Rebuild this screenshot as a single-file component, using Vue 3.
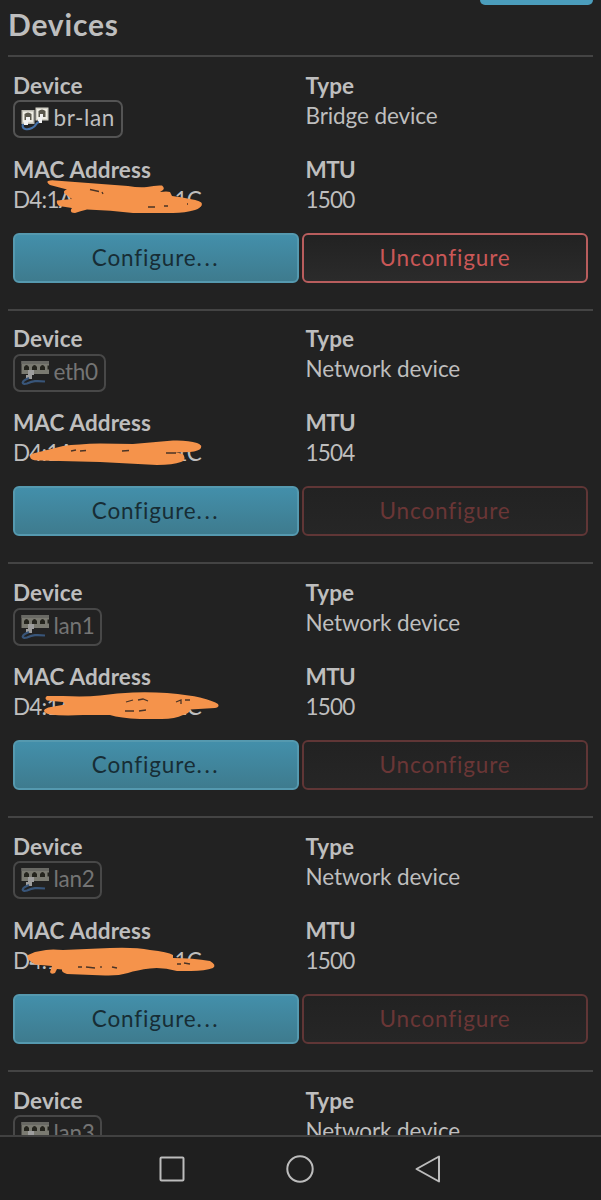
<template>
  <div class="screen">
    <main class="content">
      <div class="top-action"></div>
      <h3 class="title">Devices</h3>

      <section v-for="d in devices" :key="d.name" class="device">
        <div class="grid">
          <div class="cell">
            <div class="label">Device</div>
            <span class="badge" :class="{ inactive: !d.bridge }">
              <svg v-if="d.bridge" class="badge-icon" viewBox="0 0 28 26">
                <path d="M0.5 5h13v14h-13z" fill="#bdbbb2" />
                <path d="M14.5 2.5h13v13h-13z" fill="#d2d0c6" />
                <path d="M2 6.5h10v11H2zM16 4h10v10H16z" fill="#efede4" />
                <path d="M3.5 9q3.5-3 7 0v6h-7zM17.5 6q3.5-3 7 0v6h-7z" fill="#5b584d" />
                <path d="M5 12h4v4H7v4H3v-4h2zM19 9h3v4h-1v5h-4v-5h2z" fill="#f2f2f2" />
                <path d="M2 19C0 25 7 25 11 23C16 21 14 18 18 17" class="cable" />
              </svg>
              <svg v-else class="badge-icon" viewBox="0 0 28 26">
                <path d="M0.5 2h27.5v13H0.5z" fill="#aaa99c" />
                <path d="M0.5 2h27.5v3H0.5z" fill="#8f8f88" />
                <path d="M3 8q2.5-4 5 0v3H3zM11 8q2.5-4 5 0v3h-5zM19 8q2.5-4 5 0v3h-5zM26.5 6.5h1.5v4h-1.5z" fill="#26261b" />
                <path d="M7 11h6v5h-2v4H5v-4h2z" fill="#e0e0e0" />
                <path d="M8 19C0 22 0 26 6 24.5C12 22 15 21.5 24 22.5" class="cable" />
              </svg>
              <span>{{ d.name }}</span>
            </span>
          </div>
          <div class="cell">
            <div class="label">Type</div>
            <div class="value">{{ d.type }}</div>
          </div>
          <template v-if="d.mtu">
            <div class="cell">
              <div class="label">MAC Address</div>
              <div class="value mac">
                <span class="digits">D4:1A</span>
                <span class="digits">1C</span>
                <svg class="scribble" viewBox="0 0 210 30">
                  <path :d="d.scribble" class="ink" />
                  <path :d="d.gaps" class="gaps" />
                </svg>
              </div>
            </div>
            <div class="cell">
              <div class="label mtu-label">MTU</div>
              <div class="value digits">{{ d.mtu }}</div>
            </div>
          </template>
        </div>
        <div v-if="d.mtu" class="actions">
          <button class="btn configure">Configure<span class="dots">...</span></button>
          <button class="btn unconfigure" :disabled="!d.bridge">Unconfigure</button>
        </div>
      </section>
    </main>

    <nav class="navbar">
      <svg viewBox="0 0 28 28"><rect x="2.5" y="2.5" width="23" height="23" rx="1" /></svg>
      <svg viewBox="0 0 28 28"><circle cx="14" cy="14" r="12.7" /></svg>
      <svg viewBox="0 0 28 28"><path d="M2.5 14L25 1.5V26.5Z" /></svg>
    </nav>
  </div>
</template>

<script setup>
const devices = [
  {
    name: "br-lan",
    type: "Bridge device",
    mtu: 1500,
    bridge: true,
    scribble:
      "M35 -4Q38 -5 42 -4.5L115 1Q126 3 134 2Q143 0 149 0.5Q152 3 150 5L147 7Q154 6 157 7L159 11Q168 12 177 14Q189 16 189 19Q188 23 182 25Q172 28 160 28L120 28Q98 25 74 24.5Q67 26 62 28Q57 28 58 24.5L59 23L46 21Q43 18 44 15.5L59 14L52 9Q49 6 54 4.5L37 0Q33 -3 35 -4Z",
    gaps: "M77 4.5l9 2M89 7l1 2M135 22h7M151 21h4M174 19h1",
  },
  {
    name: "eth0",
    type: "Network device",
    mtu: 1504,
    bridge: false,
    scribble:
      "M17 18.5Q17 16 24 14.5L50 8Q65 6 87 5.5L120 6Q140 4 160 2.5Q175 2 184 5Q189 7 188 10Q186 13 177 14L162 14.5Q171 15 171 18Q173 22 168 24Q160 27 144 27L87 24Q57 23 27 22.5Q17 23 17 18.5Z",
    gaps: "M58 13l5-1M67 13l6-.5M109 13l7-.5M153 15h10",
  },
  {
    name: "lan1",
    type: "Network device",
    mtu: 1500,
    bridge: false,
    scribble:
      "M34 4L50 4Q72 5 87 3.5Q105 1 120 .5Q138 0 154 1Q177 3 187 5.5Q201 9 205 12Q207 15 202 16L177 17.5Q177 21 170 23Q162 27 149 27L127 27Q107 26 97 23L70 23Q50 24 37 22.5Q31 21 31 18.5Q32 16 38 15L52 12.5L50 10L34 8.5Q31 6 34 4Z",
    gaps: "M113 10l7-2M125 8l5-1l5 2M112 19h9M126 19l7-1M163 10l5-2v4M172 8h5",
  },
  {
    name: "lan2",
    type: "Network device",
    mtu: 1500,
    bridge: false,
    scribble:
      "M15 9L22 6L33 4Q39 3 50 4L97 2Q122 1 137 4Q155 6 160 9L160 12Q180 12 197 15Q204 19 200 22Q192 25 178 25L164 25Q149 21 137 22.5Q124 24 115 27Q105 30 92 29.5L54 28Q48 26 49 23.5L44 23L42 27Q38 29 37 26L39 20L22 18.5L15 13.5Q14 10 15 9Z",
    gaps: "M65 21h4M73 21l9 1M88 20v2M99 21l5 1M164 18h4M171 17l6 1",
  },
  { name: "lan3", type: "Network device", bridge: false },
];
</script>

<style>
html,
body {
  margin: 0;
  background: #222;
}
</style>

<style scoped>
.screen {
  display: flex;
  flex-direction: column;
  height: 1200px;
  overflow: hidden;
  background: #222;
  color: #bebebe;
  font-family: Lato, "Liberation Sans", sans-serif;
  font-size: 22.5px;
  line-height: 30px;
}

.content {
  flex: 1;
  min-height: 0;
  overflow: hidden;
  padding: 0 8px;
}

.top-action {
  width: 113px;
  height: 4.5px;
  margin-left: auto;
  border-radius: 0 0 6px 6px;
  background: #4b9dbc;
}

.title {
  height: 50.25px;
  margin: 0;
  font-size: 30px;
  line-height: 39px;
  letter-spacing: 0.8px;
}

.device {
  box-sizing: border-box;
  height: 253.75px;
  border-top: 2px solid #444;
  padding: 13.75px 5px 0;
}

.grid {
  display: grid;
  grid-template-columns: 292.5px 1fr;
  grid-auto-rows: 84px;
}

.label {
  font-weight: 700;
  letter-spacing: 0.1px;
}

.mtu-label {
  letter-spacing: -0.6px;
}

.value {
  height: 30px;
  white-space: nowrap;
  letter-spacing: -0.1px;
}

.digits {
  letter-spacing: -0.8px;
}

.badge {
  box-sizing: border-box;
  display: inline-flex;
  align-items: center;
  height: 38px;
  margin-top: -0.5px;
  padding: 0 6px 2px 5.5px;
  gap: 5px;
  border: 2px solid #545454;
  border-radius: 7px;
  vertical-align: top;
  letter-spacing: 0.6px;
}

.badge-icon {
  width: 28px;
  height: 26px;
}

.cable {
  fill: none;
  stroke: #4571a8;
  stroke-width: 2.2;
}

.inactive {
  border-color: #484848;
  color: #747474;
  letter-spacing: -0.3px;
}

.inactive .badge-icon {
  opacity: 0.65;
}

.mac {
  position: relative;
  display: flex;
  justify-content: space-between;
  width: 188px;
}

.scribble {
  position: absolute;
  top: 0;
  left: 0;
  width: 210px;
  height: 30px;
  overflow: visible;
}

.ink {
  fill: #f5934b;
}

.gaps {
  fill: none;
  stroke: #4a3426;
  stroke-width: 1.3;
}

.actions {
  display: flex;
  gap: 3px;
  margin-top: -6px;
}

.btn {
  box-sizing: border-box;
  width: 286px;
  height: 50px;
  padding: 0;
  border: 2px solid #5599af;
  border-radius: 6px;
  font: inherit;
  letter-spacing: 0.85px;
}

.configure {
  background: linear-gradient(#438faa, #3e7b8e);
  color: #172d35;
}

.dots {
  letter-spacing: 2.6px;
}

.unconfigure {
  border-color: #b85d5d;
  background: linear-gradient(#222, #2b2b2b);
  color: #ca5757;
}

.unconfigure:disabled {
  border-color: #603636;
  background: linear-gradient(#222, #262626);
  color: #6a3636;
}

.navbar {
  box-sizing: border-box;
  display: flex;
  justify-content: center;
  gap: 100px;
  height: 65px;
  padding: 17.5px 1px 0 0;
  border-top: 2px solid #414141;
  background: #1f1f1f;
}

.navbar svg {
  width: 28px;
  height: 28px;
  fill: none;
  stroke: #bcbcbc;
  stroke-width: 2;
  stroke-linejoin: round;
}
</style>
